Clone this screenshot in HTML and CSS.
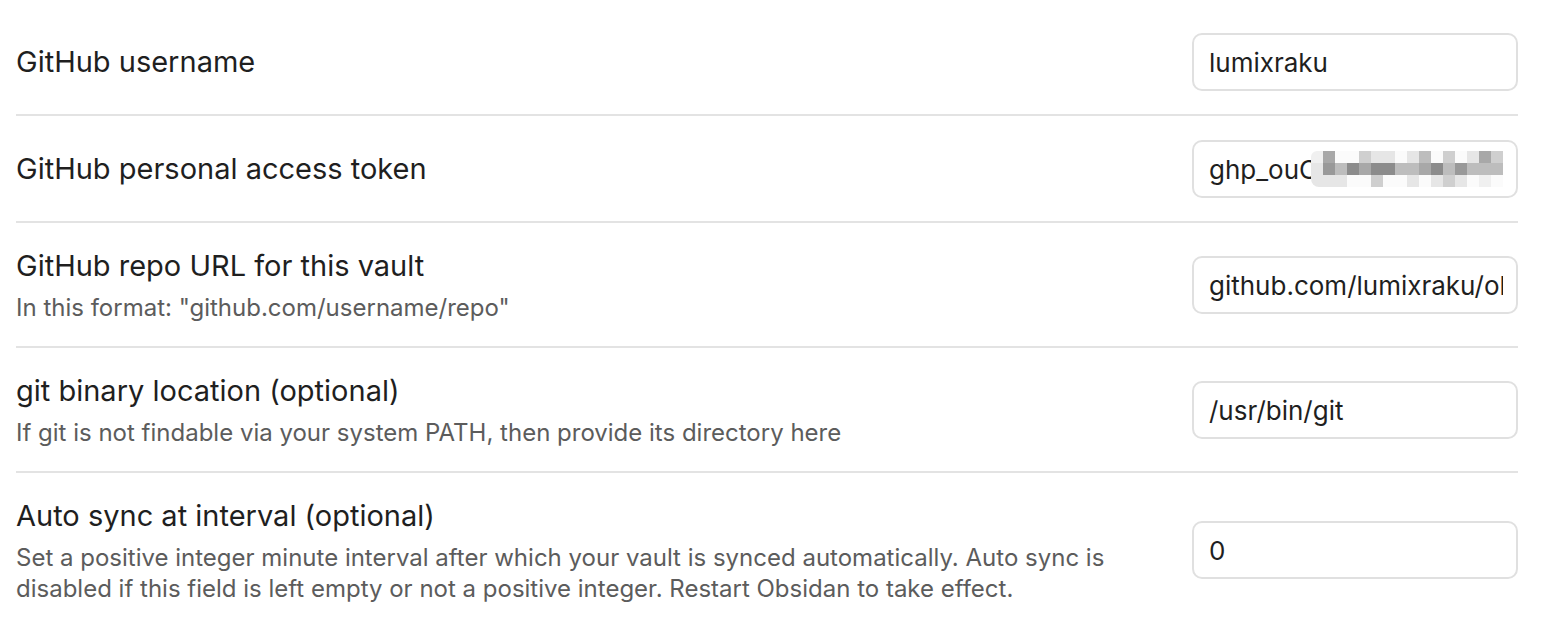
FILE: index.html
```html
<!DOCTYPE html>
<html>
<head>
<meta charset="utf-8">
<link rel="stylesheet" href="styles.css">
</head>
<body>
<div class="settings">
  <div class="setting-item first">
    <div class="info">
      <div class="name">GitHub username</div>
    </div>
    <div class="control">
      <div class="input"><span class="value">lumixraku</span></div>
    </div>
  </div>
  <div class="setting-item">
    <div class="info">
      <div class="name">GitHub personal access token</div>
    </div>
    <div class="control">
      <div class="input token">
        <span class="value">ghp_ouC</span>
        <div class="mosaic">
          <i class="c0"></i><i class="c4"></i><i class="c0w"></i><i class="c0w"></i><i class="c2"></i><i class="c1"></i><i class="c1"></i><i class="c0w"></i><i class="c1"></i><i class="c3"></i><i class="c0w"></i><i class="c2"></i><i class="c0w"></i><i class="c1"></i><i class="c4"></i><i class="c2"></i>
          <i class="c1"></i><i class="c5"></i><i class="c3"></i><i class="c6"></i><i class="c4"></i><i class="c6"></i><i class="c6"></i><i class="c3"></i><i class="c3"></i><i class="c4"></i><i class="c6"></i><i class="c3"></i><i class="c5"></i><i class="c3"></i><i class="c3"></i><i class="c3"></i>
          <i class="c1"></i><i class="c1"></i><i class="c1"></i><i class="c0w"></i><i class="c0w"></i><i class="c2"></i><i class="c0w"></i><i class="c0w"></i><i class="c1"></i><i class="c0w"></i><i class="c1"></i><i class="c2"></i><i class="c1"></i><i class="c0w"></i><i class="c0"></i><i class="c0w"></i>
        </div>
      </div>
    </div>
  </div>
  <div class="setting-item">
    <div class="info">
      <div class="name">GitHub repo URL for this vault</div>
      <div class="desc">In this format: "github.com/username/repo"</div>
    </div>
    <div class="control">
      <div class="input"><span class="value">github.com/lumixraku/obsidian</span></div>
    </div>
  </div>
  <div class="setting-item">
    <div class="info">
      <div class="name">git binary location (optional)</div>
      <div class="desc">If git is not findable via your system PATH, then provide its directory here</div>
    </div>
    <div class="control">
      <div class="input"><span class="value">/usr/bin/git</span></div>
    </div>
  </div>
  <div class="setting-item">
    <div class="info wide">
      <div class="name">Auto sync at interval (optional)</div>
      <div class="desc">Set a positive integer minute interval after which your vault is synced automatically. Auto sync is disabled if this field is left empty or not a positive integer. Restart Obsidan to take effect.</div>
    </div>
    <div class="control">
      <div class="input"><span class="value">0</span></div>
    </div>
  </div>
</div>
</body>
</html>
```
FILE: styles.css
```css
html, body {
  margin: 0;
  padding: 0;
  background: #ffffff;
}
body {
  font-family: Inter, "Noto Sans", "Liberation Sans", sans-serif;
  color: #1f1f1f;
}
.settings {
  padding: 9px 30px 0 16px;
}
.setting-item {
  display: flex;
  align-items: center;
  justify-content: space-between;
  padding: 23.5px 0;
  border-top: 2px solid #e3e3e3;
}
.setting-item.first {
  border-top: none;
}
.info {
  flex: 0 1 auto;
  display: flex;
  flex-direction: column;
  gap: 7px;
  margin-right: 40px;
}
.info.wide {
  max-width: 1135px;
}
.name {
  font-size: 29px;
  line-height: 38px;
  color: #1f1f1f;
}
.desc {
  font-size: 24px;
  line-height: 31px;
  color: #5c5c5c;
}
.control {
  flex: 0 0 auto;
  margin-left: auto;
}
.input {
  box-sizing: border-box;
  width: 326px;
  height: 58px;
  border: 2px solid #e0e0e0;
  border-radius: 10px;
  padding: 0 13px 0 15px;
  font-size: 26px;
  line-height: 55px;
  color: #1f1f1f;
  white-space: nowrap;
  overflow: hidden;
  position: relative;
}
.value {
  display: block;
  overflow: hidden;
  white-space: nowrap;
}
.token .mosaic {
  position: absolute;
  left: 117px;
  top: 9px;
  width: 192px;
  height: 36px;
  display: grid;
  grid-template-columns: repeat(16, 12px);
  grid-template-rows: repeat(3, 12px);
  border-radius: 6px 0 0 8px;
  overflow: hidden;
}
.mosaic i { display: block; }
.c0w { background: #fbfbfb; }
.c0 { background: #f0f0f0; }
.c1 { background: #e6e6e6; }
.c2 { background: #cfcfcf; }
.c3 { background: #bdbdbd; }
.c4 { background: #a8a8a8; }
.c5 { background: #999999; }
.c6 { background: #8c8c8c; }
```
